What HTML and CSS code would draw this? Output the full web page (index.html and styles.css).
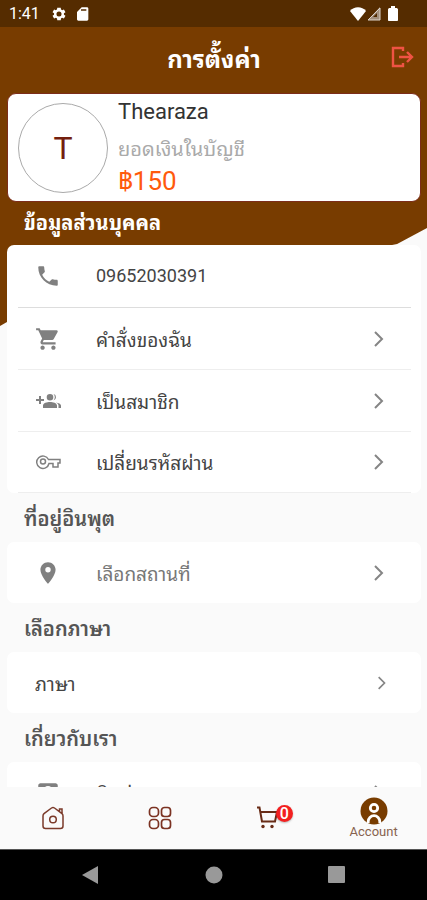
FILE: index.html
```html
<!DOCTYPE html>
<html lang="th">
<head>
<meta charset="utf-8">
<meta name="viewport" content="width=device-width, initial-scale=1">
<title>การตั้งค่า</title>
<link rel="stylesheet" href="styles.css">
</head>
<body>
<div class="app">
  <div class="status">
    <span class="clock">1:41</span>
    <svg width="16" height="16" viewBox="0 0 24 24" fill="currentColor"><path fill-rule="evenodd" d="M19.4 13a7.500 7.500 0 0 0 0-2l2.300-1.700-2.300-4-2.700 1.100a7.500 7.500 0 0 0-1.700-1L14.600 2.500H9.400L9 5.400a7.500 7.500 0 0 0-1.700 1L4.600 5.300l-2.300 4L4.600 11a7.500 7.500 0 0 0 0 2l-2.300 1.700 2.300 4 2.700-1.100a7.500 7.500 0 0 0 1.700 1l.4 2.900h5.200l.4-2.900a7.500 7.500 0 0 0 1.700-1l2.700 1.100 2.300-4zM12 15.800a3.800 3.800 0 1 1 0-7.600 3.800 3.800 0 0 1 0 7.600z"/></svg>
    <svg width="16" height="16" viewBox="0 0 24 24" fill="currentColor"><path fill-rule="evenodd" d="M18 2h-8L3 9v11c0 1.100.9 2 2 2h13c1.100 0 2-.9 2-2V4c0-1.100-.9-2-2-2zM9 5h8v2H9z"/></svg>
    <svg class="push" width="18" height="16" viewBox="0 0 18 16" fill="currentColor"><path d="M9 15 1 5c4-5 12-5 16 0z"/></svg>
    <svg width="14" height="16" viewBox="0 0 14 16"><path d="M13 1v13H1z" fill="#a28f7c"/><path d="M10 7v4H6z" fill="#512b00"/><path d="M13 2v12H1z" fill="none" stroke="#ddd3c9"/></svg>
    <svg class="battery" width="10" height="16" viewBox="0 0 10 16" fill="currentColor"><path d="M3 0h4v2h1c1 0 2 .5 2 1.500V14c0 .7-.5 1-1 1H1c-.5 0-1-.3-1-1V3.500C0 2.500 1 2 2 2h1z"/></svg>
  </div>

  <main class="page">
    <header class="topbar">
      <h1>การตั้งค่า</h1>
      <button class="logout" aria-label="ออกจากระบบ">
        <svg width="24" height="22" viewBox="0 0 24 22" fill="none" stroke="currentColor" stroke-width="2.400"><path d="M12 5V2H2v18h10v-3M8 11h13M16 6l5 5-5 5"/></svg>
      </button>
    </header>

    <section class="profile">
      <div class="avatar">T</div>
      <div class="who">
        <div class="name">Thearaza</div>
        <div class="label">ยอดเงินในบัญชี</div>
        <div class="balance">฿150</div>
      </div>
    </section>

    <h2 class="light">ข้อมูลส่วนบุคคล</h2>
    <div class="card">
      <a class="row strong" href="#"><svg class="icon" viewBox="0 0 24 24"><path d="M6.620 10.790c1.440 2.830 3.760 5.140 6.590 6.590l2.200-2.200c.27-.27.67-.36 1.020-.24 1.120.37 2.330.57 3.570.57.55 0 1 .45 1 1V20c0 .55-.45 1-1 1C10.610 21 3 13.390 3 4c0-.55.45-1 1-1h3.500c.55 0 1 .45 1 1 0 1.250.2 2.450.57 3.570.11.35.03.74-.25 1.020z"/></svg><span class="phone">09652030391</span></a>
      <a class="row" href="#"><svg class="icon" viewBox="0 0 24 24"><path d="M7 18c-1.100 0-1.990.9-1.990 2S5.900 22 7 22s2-.9 2-2-.9-2-2-2zM1 2v2h2l3.600 7.590-1.350 2.450C4.520 15.370 5.480 17 7 17h12v-2H7.420c-.14 0-.25-.11-.25-.25L8.100 13h7.450c.75 0 1.410-.41 1.750-1.030l3.580-6.490A1 1 0 0 0 20 4H5.210L4.270 2zm16 16c-1.100 0-1.990.9-1.990 2s.89 2 1.990 2 2-.9 2-2-.9-2-2-2z"/></svg><span>คำสั่งของฉัน</span><svg class="chevron" viewBox="0 0 12 16"><path d="m2 1 7 7-7 7"/></svg></a>
      <a class="row" href="#"><svg class="icon wide" viewBox="0 0 26 16"><path d="M4 3h2v3h3v2H6v3H4V8H1V6h3zM15 1a3.300 3.300 0 1 1 0 6.600A3.300 3.300 0 0 1 15 1zm3.500.1a3.300 3.300 0 0 1 0 6.400 5 5 0 0 0 0-6.400zM15 9c3 0 7 1 7 3.500V15H8v-2.500C8 10 12 9 15 9zm6 .4c2.500.4 5 1.400 5 3.100V15h-2.500v-2.500c0-1.300-1-2.300-2.500-3.100z"/></svg><span>เป็นสมาชิก</span><svg class="chevron" viewBox="0 0 12 16"><path d="m2 1 7 7-7 7"/></svg></a>
      <a class="row" href="#"><svg class="icon wide outline" viewBox="0 0 26 16"><path d="M13.500 5.500H25v3.500h-2V13h-5V9.500h-4A6.200 6.200 0 1 1 13.500 5.500z"/><circle cx="8" cy="7.500" r="2.500"/></svg><span>เปลี่ยนรหัสผ่าน</span><svg class="chevron" viewBox="0 0 12 16"><path d="m2 1 7 7-7 7"/></svg></a>
    </div>

    <h2>ที่อยู่อินพุต</h2>
    <div class="card">
      <a class="row" href="#"><svg class="icon" viewBox="0 0 24 24"><path d="M12 2C8.130 2 5 5.130 5 9c0 5.250 7 13 7 13s7-7.750 7-13c0-3.870-3.130-7-7-7zm0 9.500a2.500 2.500 0 1 1 0-5 2.500 2.500 0 0 1 0 5z"/></svg><span class="soft">เลือกสถานที่</span><svg class="chevron" viewBox="0 0 12 16"><path d="m2 1 7 7-7 7"/></svg></a>
    </div>

    <h2>เลือกภาษา</h2>
    <div class="card">
      <a class="row plain" href="#"><span>ภาษา</span><svg class="chevron small" viewBox="0 0 12 16"><path d="m2 1 7 7-7 7"/></svg></a>
    </div>

    <h2>เกี่ยวกับเรา</h2>
    <div class="card">
      <a class="row" href="#"><svg class="icon" viewBox="0 0 24 24"><path fill-rule="evenodd" d="M5 3h14c1 0 2 1 2 2v14c0 1-1 2-2 2H5c-1 0-2-1-2-2V5c0-1 1-2 2-2zm7 2.500a3.500 3.500 0 1 0 0 7 3.500 3.500 0 0 0 0-7zM5 19h14c0-3-4.500-4.500-7-4.500S5 16 5 19z"/></svg><span>ติดต่อเรา</span><svg class="chevron" viewBox="0 0 12 16"><path d="m2 1 7 7-7 7"/></svg></a>
    </div>
  </main>

  <nav class="tabs">
    <a href="#" aria-label="หน้าแรก"><svg width="24" height="24" viewBox="0 0 24 24" fill="none" stroke="#7b3a2a" stroke-width="1.500"><path d="M2 20V10q0-1.500 1-2.300L10.500 2q1.500-1 3 0L21 7.700q1 .8 1 2.300v10q0 2.500-2.500 2.500h-15Q2 22.500 2 20zM18.500 5.500V3h2.500v4.500"/><circle cx="12" cy="13.500" r="3.300"/></svg></a>
    <a href="#" aria-label="หมวดหมู่"><svg width="24" height="24" viewBox="0 0 24 24" fill="none" stroke="#7b3222" stroke-width="1.700"><rect x="1.500" y="1.500" width="9" height="9" rx="3.500"/><rect x="13.500" y="1.500" width="9" height="9" rx="3"/><rect x="1.500" y="13.500" width="9" height="9" rx="3.500"/><rect x="13.500" y="13.500" width="9" height="9" rx="3"/></svg></a>
    <a href="#" aria-label="ตะกร้า"><span class="cart"><svg width="24" height="24" viewBox="0 0 24 24"><path d="M2 1.500h2.500l2.500 14h13l2-9.500H6" fill="none" stroke="#682c17" stroke-width="2"/><circle cx="8" cy="20.500" r="1.700" fill="#682c17"/><circle cx="17" cy="20.500" r="1.700" fill="#682c17"/></svg><span class="badge">0</span></span></a>
    <a href="#"><svg width="28" height="28" viewBox="0 0 28 28"><circle cx="14" cy="14" r="13.500" fill="#783c00"/><circle cx="14" cy="11" r="3.700" fill="none" stroke="#fff" stroke-width="2.800"/><path d="M8.200 26v-1.500a5.800 5.800 0 0 1 11.600 0V26" fill="none" stroke="#fff" stroke-width="2.800"/></svg><span class="caption">Account</span></a>
  </nav>

  <div class="system">
    <svg width="20" height="20" viewBox="0 0 20 20"><path d="M17 1v18L1 10z"/></svg>
    <svg width="20" height="20" viewBox="0 0 20 20"><circle cx="10" cy="10" r="8.500"/></svg>
    <svg width="20" height="20" viewBox="0 0 20 20"><rect x="2" y="1" width="17" height="17" rx="1"/></svg>
  </div>
</div>
</body>
</html>
```
FILE: styles.css
```css
* { box-sizing: border-box; }

body {
  margin: 0;
  font-family: Roboto, "Noto Sans Thai Looped", "Noto Looped Thai", Loma, Waree, "Noto Sans Thai", "Noto Sans", sans-serif;
  color: #444;
  background: #fafafa;
}

a { color: inherit; text-decoration: none; }
svg { display: block; flex: none; }

.app {
  display: flex;
  flex-direction: column;
  height: 100vh;
}

.status {
  display: flex;
  align-items: center;
  flex: none;
  gap: 8px;
  height: 27px;
  padding: 0 29px 0 9px;
  color: #fff;
  background: #552c00;
}
.clock { font-size: 16px; margin-right: 3px; }
.push { margin-left: auto; }
.push + svg { margin-left: -8px; }
.battery { margin-left: -1px; }

.page {
  position: relative;
  z-index: 0;
  flex: 1;
  min-height: 0;
  overflow: hidden;
  padding: 0 6px 0 7px;
}
.page::before {
  content: "";
  position: absolute;
  z-index: -1;
  inset: 0 0 auto;
  height: 300px;
  background: #783c00;
  clip-path: polygon(0 0, 100% 0, 100% 201px, 93% 217px, 7px 295px, 0 299px);
}

.topbar {
  display: grid;
  grid-template-columns: 1fr auto 1fr;
  align-items: center;
  height: 66px;
}
h1 {
  grid-column: 2;
  margin: 0;
  font-size: 24px;
  font-weight: 700;
  line-height: 32px;
  color: #fff;
}
.logout {
  justify-self: end;
  margin: 0 6px 6px 0;
  padding: 0;
  border: 0;
  background: none;
  color: #ef5344;
}

.profile {
  display: flex;
  gap: 10px;
  height: 109px;
  padding: 9px 10px;
  border: 1px solid #7c2d1a;
  border-radius: 9px;
  background: #fff;
}
.avatar {
  display: grid;
  place-items: center;
  width: 90px;
  height: 90px;
  border: 1px solid #aaa;
  border-radius: 50%;
  font-size: 32px;
  color: #74200e;
}
.name { font-size: 22px; line-height: 18px; color: #333; }
.label { margin-top: 12px; font-size: 20px; line-height: 32px; color: #aaa; }
.balance { margin-top: 2px; font-size: 26px; line-height: 28px; color: #ff5a0c; }

h2 {
  height: 49px;
  margin: 0;
  padding: 4px 17px 0;
  font-size: 20px;
  font-weight: 600;
  line-height: 45px;
  color: #555;
}
.light { height: 43px; padding-top: 0; line-height: 43px; font-weight: 700; color: #fff; }

.card {
  padding: 0 10px 0 11px;
  border-radius: 7px;
  background: #fff;
}
.row {
  display: flex;
  align-items: center;
  height: 62px;
  padding: 0 26px 0 17px;
  border-bottom: 1px solid #eee;
  font-size: 19px;
}
.row.strong { height: 63px; border-color: #ddd; }
.row:last-child { height: 61px; }
.row:only-child { border: 0; }
.row.plain { padding-right: 24px; }
.row span { padding-top: 4px; line-height: 30px; }
.row .phone { padding-top: 0; font-size: 18px; color: #444; }
.row .soft { color: #777; }
.icon {
  width: 26px;
  height: 26px;
  margin-right: 35px;
  fill: #808080;
}
.icon.wide { height: 16px; }
.icon.outline { fill: none; stroke: #808080; stroke-width: 1.5px; }
.chevron {
  width: 12px;
  height: 16px;
  margin-left: auto;
  fill: none;
  stroke: #858585;
  stroke-width: 2px;
}
.chevron.small { width: 10px; height: 14px; }

.tabs {
  display: grid;
  grid-template-columns: repeat(4, 1fr);
  flex: none;
  height: 62px;
  background: #fafafa;
}
.tabs a {
  display: flex;
  flex-direction: column;
  align-items: center;
  justify-content: center;
}
.caption { font-size: 13px; line-height: 14px; color: #87624e; }
.cart { position: relative; }
.badge {
  position: absolute;
  top: -1px;
  right: -14px;
  width: 17px;
  height: 17px;
  border-radius: 50%;
  background: #f32020;
  color: #fff;
  font-size: 16px;
  font-weight: 500;
  line-height: 17px;
  text-align: center;
  box-shadow: 0 1px 2px #0004;
}

.system {
  display: flex;
  align-items: center;
  justify-content: space-between;
  flex: none;
  height: 51px;
  padding: 0 19%;
  border-top: 1px solid #555;
  background: #000;
}
.system svg { fill: #999; }
```
